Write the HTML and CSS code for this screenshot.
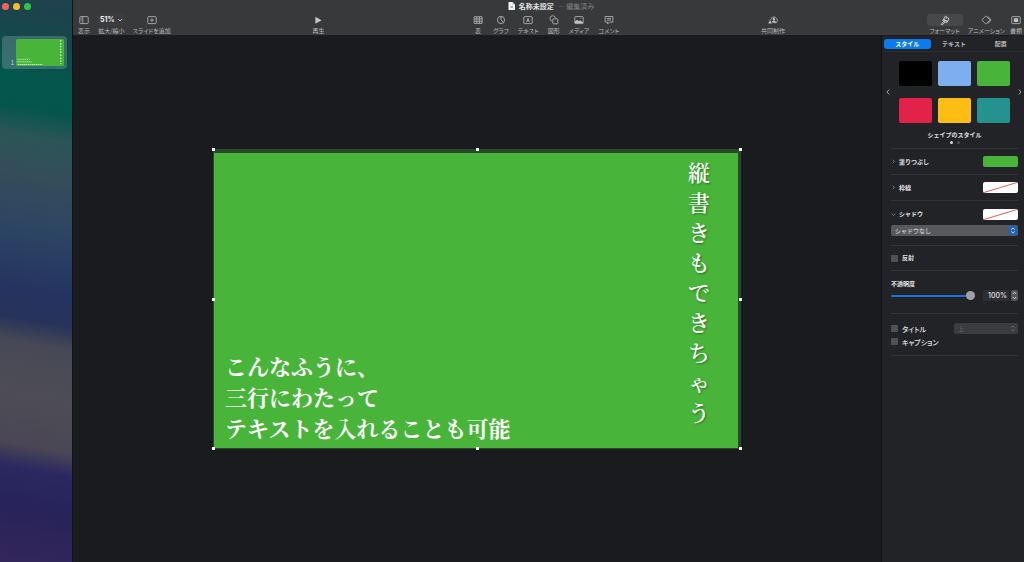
FILE: index.html
```html
<!DOCTYPE html>
<html lang="ja">
<head>
<meta charset="utf-8">
<title>名称未設定</title>
<link rel="stylesheet" href="styles.css">
</head>
<body>
<div class="app">
  <aside class="sidebar">
    <div class="lights"><button class="light red" aria-label="閉じる"></button><button class="light yellow" aria-label="しまう"></button><button class="light green" aria-label="拡大"></button></div>
    <div class="slide-item">
      <span class="slide-no">1</span>
      <svg class="thumb" viewBox="0 0 48 27" aria-hidden="true">
        <rect width="48" height="27" rx="1.5" fill="#48b53a"/>
        <g stroke="#c4ebbd" fill="none">
          <path d="M1.500 20.300h12" stroke-width=".9" stroke-dasharray="1.200 .7"/>
          <path d="M1.500 22.800h14" stroke-width=".9" stroke-dasharray="1.300 .6"/>
          <path d="M1.500 25.500h25" stroke-width="1.100" stroke-dasharray="1.500 .5"/>
          <path d="M44.700 1v24" stroke-width="1.300" stroke-dasharray="1.500 1.400"/>
        </g>
      </svg>
    </div>
  </aside>

  <div class="workspace">
    <header class="toolbar">
      <div class="doc-title">
        <svg width="7" height="8" viewBox="0 0 7 8"><path d="M.5 0h4L7 2.500V8H.5z" fill="#f3f5f7"/><path d="M4.500 0v2.500H7z" fill="#a9bccb"/><path d="M2.500 4h2.500v2H2.500z" fill="#8fb4d4"/></svg>
        <strong>名称未設定</strong><span class="edited">— 編集済み</span>
      </div>
      <nav class="tools">
        <div class="group group-left">
          <button class="tool"><svg viewBox="0 0 10 10"><rect x="1.500" y="2.200" width="7" height="5.800" rx=".7"/><path d="M4 2.200v5.800M2.300 3.700h.8M2.300 5h.8"/></svg>表示</button>
          <button class="tool"><span class="zoom">51%<svg viewBox="0 0 6 6"><path d="M1 2l2 2 2-2"/></svg></span>拡大/縮小</button>
          <button class="tool"><svg viewBox="0 0 10 10"><rect x="1.500" y="2.200" width="7" height="5.800" rx=".7"/><path d="M5 3.600v3M3.500 5.100h3"/></svg>スライドを追加</button>
        </div>
        <div class="group">
          <button class="tool"><svg viewBox="0 0 10 10"><path class="solid" d="M2.800 2.200v6l5.200-3z"/></svg>再生</button>
        </div>
        <div class="group group-insert">
          <button class="tool"><svg viewBox="0 0 10 10"><path d="M1.800 2.300h6.600v5.500H1.800zM1.800 4.100h6.600M1.800 6h6.600M4 2.300v5.500M6.200 2.300v5.500"/></svg>表</button>
          <button class="tool"><svg viewBox="0 0 10 10"><circle cx="5" cy="5" r="3"/><path d="M5 2V5l2.100 2"/></svg>グラフ</button>
          <button class="tool"><svg viewBox="0 0 10 10"><rect x="1.500" y="2.200" width="7" height="5.800" rx=".5"/><path d="M3.900 6.600L5 3.600l1.100 3M4.200 5.700h1.600"/></svg>テキスト</button>
          <button class="tool"><svg viewBox="0 0 10 10"><path d="M3.500 6a2.300 2.300 0 1 1 2.700-2.700"/><rect x="4" y="4" width="4.200" height="4.200" rx=".6"/></svg>図形</button>
          <button class="tool"><svg viewBox="0 0 10 10"><rect x="1.500" y="2.200" width="7" height="5.800" rx=".6"/><path class="solid" d="M1.600 7.800V6.300L3.500 4.700 5 6.100 6 5.200l2.400 1.800v.8z"/><circle class="solid" cx="6.600" cy="3.800" r=".4"/></svg>メディア</button>
          <button class="tool"><svg viewBox="0 0 10 10"><path d="M1.800 2.100h6.400v4.700H5.300L3.900 8.300V6.800H1.800zM3.300 3.800h3.400M3.300 5.100h3.400"/></svg>コメント</button>
        </div>
        <div class="group">
          <button class="tool"><svg viewBox="0 0 10 10"><path d="M3 4.800a2.800 2.800 0 1 1 4.700 2.500H5.500"/><circle class="solid" cx="5.700" cy="4.200" r="1"/><path class="solid" d="M4 7c.3-2 3.200-2 3.500 0zM1.100 8c0-2 2.800-2 2.800 0z"/><circle class="solid" cx="2.500" cy="5.900" r=".7"/></svg>共同制作</button>
        </div>
        <div class="group group-right">
          <button class="tool tool-on"><svg viewBox="0 0 10 10"><path d="M5.400 1.800l3 2.200-1.300 2.300-3.400-1.800zM3.700 4.500l3.400 1.800-.7.900-3.300-1.700zM4 6L1.900 8.700l.9.300 2.400-2.400M6.500 2.700l-.9 1.400"/></svg>フォーマット</button>
          <button class="tool"><svg viewBox="0 0 10 10"><path d="M4.500 1.900a.6.600 0 0 1 .8 0L7.900 4.600a.6.600 0 0 1 0 .8L5.300 8.100a.6.600 0 0 1-.8 0L1.900 5.400a.6.600 0 0 1 0-.8z"/><path d="M6.700 2l2.500 3-2.500 3"/></svg>アニメーション</button>
          <button class="tool"><svg viewBox="0 0 10 10"><rect x="1.500" y="2.200" width="7" height="5.800" rx=".4"/><path class="solid" d="M3.200 3.500h3.600v3.200H3.200z"/></svg>書類</button>
        </div>
      </nav>
    </header>

    <div class="body">
      <main class="canvas">
        <div class="selection">
          <div class="slide">
            <p class="lines">こんなふうに、<br>三行にわたって<br>テキストを入れることも可能</p>
            <p class="column">縦<br>書<br>き<br>も<br>で<br>き<br>ち<br>ゃ<br>う</p>
          </div>
          <i class="handle n w"></i><i class="handle n c"></i><i class="handle n e"></i>
          <i class="handle m w"></i><i class="handle m e"></i>
          <i class="handle s w"></i><i class="handle s c"></i><i class="handle s e"></i>
        </div>
      </main>

      <aside class="inspector">
        <div class="tabs"><button class="tab tab-on">スタイル</button><button class="tab">テキスト</button><button class="tab">配置</button></div>
        <section class="styles">
          <button class="page" aria-label="前へ"><svg viewBox="0 0 4 8"><path d="M3.200 1.500L1 4l2.200 2.500"/></svg></button>
          <div class="swatches">
            <button class="swatch black" aria-label="黒"></button><button class="swatch blue" aria-label="青"></button><button class="swatch lime" aria-label="緑"></button>
            <button class="swatch crimson" aria-label="赤"></button><button class="swatch amber" aria-label="黄"></button><button class="swatch teal" aria-label="青緑"></button>
          </div>
          <button class="page" aria-label="次へ"><svg viewBox="0 0 4 8"><path d="M.8 1.500L3 4 .8 6.500"/></svg></button>
        </section>
        <div class="styles-name">シェイプのスタイル</div>
        <div class="dots"><i class="dot dot-on"></i><i class="dot"></i></div>
        <section class="row">
          <svg class="chev" viewBox="0 0 5 5"><path d="M1.700 .8L3.500 2.500 1.700 4.200"/></svg><span class="row-name">塗りつぶし</span><button class="well lime" aria-label="塗りつぶし"></button>
        </section>
        <section class="row">
          <svg class="chev" viewBox="0 0 5 5"><path d="M1.700 .8L3.500 2.500 1.700 4.200"/></svg><span class="row-name">枠線</span><button class="well" aria-label="枠線"><svg viewBox="0 0 35 11" preserveAspectRatio="none"><path d="M1 10.500L34 .5"/></svg></button>
        </section>
        <section class="row row-open">
          <svg class="chev" viewBox="0 0 5 5"><path d="M.8 1.700L2.500 3.500 4.200 1.700"/></svg><span class="row-name">シャドウ</span><button class="well" aria-label="シャドウ"><svg viewBox="0 0 35 11" preserveAspectRatio="none"><path d="M1 10.500L34 .5"/></svg></button>
        </section>
        <div class="picker shadow-picker">
          <select aria-label="シャドウの種類"><option>シャドウなし</option></select>
          <svg class="arrows" viewBox="0 0 8 9"><rect width="8" height="9" rx="2" fill="#1463d6" stroke="none"/><path d="M2.300 3.600L4 2l1.700 1.600M2.300 5.500L4 7.100l1.700-1.600"/></svg>
        </div>
        <section class="row"><label class="check"><input type="checkbox"><b>反射</b></label></section>
        <section class="opacity">
          <label for="opacity">不透明度</label>
          <div class="opacity-row">
            <input type="range" id="opacity" min="0" max="100" value="100">
            <input type="text" class="percent" value="100%" aria-label="不透明度の値">
            <button class="stepper" aria-label="増減"><svg viewBox="0 0 7 11"><path d="M1.800 4L3.500 2.200 5.200 4M1.800 7L3.500 8.800 5.200 7"/></svg></button>
          </div>
        </section>
        <section class="captions">
          <div class="caption-row">
            <label class="check"><input type="checkbox">タイトル</label>
            <div class="picker place-picker">
              <select aria-label="タイトルの位置" disabled><option>上</option></select>
              <svg class="arrows" viewBox="0 0 8 9"><path d="M2.300 3.600L4 2l1.700 1.600M2.300 5.500L4 7.100l1.700-1.600"/></svg>
            </div>
          </div>
          <div class="caption-row"><label class="check"><input type="checkbox">キャプション</label></div>
        </section>
      </aside>
    </div>
  </div>
</div>
</body>
</html>
```

FILE: styles.css
```css
* { box-sizing: border-box; }
body {
  margin: 0;
  background: #1a1b1f;
  color: #e2e2e4;
  font: 6px/8px "Noto Sans CJK JP", sans-serif;
}
button, input, select {
  margin: 0;
  padding: 0;
  border: 0;
  background: none;
  color: inherit;
  font: inherit;
}
svg { display: block; fill: none; }
p { margin: 0; }

.app { display: flex; min-height: 100vh; }

/* Slide navigator */
.sidebar {
  flex: 0 0 72px;
  padding: 3px 5px 0 2px;
  border-right: 1px solid #101318;
  background: linear-gradient(190deg, #20414f 0%, #16474b 7%, #04574d 15%, #04564d 20%, #2b5557 25%, #344e59 31%, #2c4464 42%, #24335f 52%, #28335b 57%, #464855 61%, #4e4d56 70%, #4a4655 79%, #2a2860 83%, #28235a 90%, #33265a 100%);
}
.lights { display: flex; gap: 4px; }
.light { width: 7px; height: 7px; border-radius: 50%; }
.red { background: #fb5f57; }
.yellow { background: #fdbc2f; }
.green { background: #2bc840; }
.slide-item {
  display: flex;
  align-items: flex-end;
  gap: 2px;
  height: 33px;
  margin-top: 26px;
  padding: 3px;
  border-radius: 4px;
  background: rgba(255, 255, 255, 0.18);
}
.slide-no { width: 9px; text-align: right; color: #c5d8d5; font-size: 6px; line-height: 6px; }
.thumb { width: 48px; height: 27px; }

/* Toolbar */
.workspace { flex: 1; display: flex; flex-direction: column; min-width: 0; }
.toolbar {
  height: 36px;
  padding: 2px 2px 0 5px;
  background: #38393b;
  border-bottom: 1px solid #1c1c22;
}
.doc-title {
  display: flex;
  justify-content: center;
  align-items: center;
  gap: 4px;
  height: 8px;
  padding-left: 2px;
  font-size: 7px;
}
.edited { color: #808183; }
.tools { display: flex; justify-content: space-between; margin-top: 4px; }
.group { display: flex; gap: 9px; }
.group-left { gap: 7px; }
.group-insert { margin-left: 6px; }
.group-right { gap: 5px; }
.tool {
  display: flex;
  flex-direction: column;
  align-items: center;
  gap: 1px;
  color: #b8b8ba;
  font-size: 6px;
  line-height: 8px;
  white-space: nowrap;
  font-feature-settings: "palt";
}
.tool svg { width: 12px; height: 12px; stroke: #b7b7b9; stroke-width: 0.700; }
.tool .solid { fill: #c3c3c5; stroke: none; }
.tool-on svg { width: 36px; border-radius: 3px; background: #47484a; stroke: #e0e0e0; }
.zoom {
  display: flex;
  align-items: center;
  gap: 2px;
  height: 12px;
  padding: 0 3px;
  border-radius: 3px;
  background: #3b3c3e;
  color: #f0f0f0;
  font: bold 7px/12px Inter, sans-serif;
}
.tool .zoom svg { width: 6px; height: 6px; stroke-width: 1; }

/* Canvas */
.body { flex: 1; display: flex; }
.canvas { flex: 1; display: flex; justify-content: center; align-items: center; min-width: 0; }
.selection {
  position: relative;
  width: calc(65% + 3px);
  aspect-ratio: 528 / 300;
  padding: 4px 3px 1px 1px;
  background: #284a2b;
}
.slide { display: flex; justify-content: space-between; height: 100%; background: #48b53a; color: #fff; }
.lines, .column { font-family: "Noto Serif CJK JP", "Noto Sans CJK JP", serif; font-size: 22px; }
.lines { align-self: flex-end; padding: 0 0 5px 11px; font-weight: bold; line-height: 31px; white-space: nowrap; }
.column { padding: 4px 28px 0 0; font-weight: 600; line-height: 30px; text-shadow: 1px 1px 2px rgba(0, 50, 0, 0.5); }
.handle { position: absolute; width: 3px; height: 3px; background: #fff; }
.n { top: -1px; }
.m { top: calc(50% - 1px); }
.s { bottom: -1px; }
.w { left: -1px; }
.c { left: calc(50% - 1px); }
.e { right: -1px; }

/* Inspector */
.inspector { flex: 0 0 143px; min-width: 0; padding: 3px 6px 0 9px; border-left: 1px solid #101114; background: #222327; }
.tabs { display: flex; margin: 0 -6px 0 -7px; padding-bottom: 2px; border-bottom: 1px solid #2a2b2f; }
.tab { flex: 1; height: 10px; color: #b9b9bb; font-weight: bold; line-height: 10px; }
.tab-on { border-radius: 3px; background: #0b7bf0; color: #fff; }
.styles { display: flex; justify-content: space-between; align-items: center; margin: 9px -4px 0 -5px; }
.page svg { width: 4px; height: 8px; stroke: #b0b0b2; stroke-width: 0.900; }
.swatches { display: grid; grid-template-columns: repeat(3, 33px); gap: 12px 6px; }
.swatch { height: 25px; border-radius: 2px; }
.black { background: #000; }
.blue { background: #7daeef; }
.lime { background: #48b53a; }
.crimson { background: #e32249; }
.amber { background: #fdbd15; }
.teal { background: #24938f; }
.styles-name { margin-top: 8px; text-align: center; font-weight: bold; }
.dots { display: flex; justify-content: center; gap: 4px; height: 10px; padding-top: 2px; border-bottom: 1px solid #323337; }
.dot { width: 3px; height: 3px; border-radius: 50%; background: #505154; }
.dot-on { background: #d8d8da; }
.row { display: flex; align-items: center; height: 26px; border-bottom: 1px solid #323337; }
.row-open { height: 24px; padding-top: 2px; border-bottom: 0; }
.chev { width: 5px; height: 5px; stroke: #9a9a9d; stroke-width: 0.700; }
.row-name { flex: 1; padding-left: 3px; font-weight: bold; }
.well { width: 35px; height: 11px; border-radius: 2px; overflow: hidden; }
.well:not(.lime) { background: #fff; }
.well svg { width: 100%; height: 100%; stroke: #e0605a; stroke-width: 1; }
.picker { position: relative; border-radius: 2px; background: #58595c; }
.picker select { display: block; width: 100%; height: 11px; padding: 0 10px 0 4px; appearance: none; line-height: 11px; }
.arrows { position: absolute; top: 1px; right: 1px; width: 8px; height: 9px; stroke: #fff; stroke-width: 0.900; pointer-events: none; }
.shadow-picker { margin-bottom: 9px; }
.shadow-picker + .row { border-top: 1px solid #323337; }
.check { display: flex; align-items: center; gap: 4px; font-size: 7px; font-weight: 500; font-feature-settings: "palt"; }
.check b { font-size: 6px; }
.check input { width: 7px; height: 7px; appearance: none; border-radius: 1px; background: #505155; }
.opacity { height: 43px; padding-top: 9px; border-bottom: 1px solid #323337; font-weight: bold; }
.opacity label { display: block; }
.opacity-row { display: flex; align-items: center; margin-top: 2px; }
input[type="range"] { flex: 1; min-width: 0; height: 9px; appearance: none; }
input[type="range"]::-webkit-slider-runnable-track { height: 2px; border-radius: 1px; background: #1d6fdc; }
input[type="range"]::-webkit-slider-thumb { appearance: none; width: 9px; height: 9px; margin-top: -4px; border-radius: 50%; background: #a0a1a3; }
.percent { width: 26px; height: 11px; margin: 0 2px 0 8px; padding-right: 2px; background: #2d2e32; text-align: right; font: 500 7px/11px Inter, sans-serif; }
.stepper { width: 7px; height: 11px; border-radius: 2px; background: #56575a; }
.stepper svg { width: 7px; height: 11px; stroke: #e0e0e0; stroke-width: 0.900; }
.captions { height: 42px; padding-top: 8px; border-bottom: 1px solid #323337; }
.caption-row { display: flex; align-items: center; justify-content: space-between; height: 13px; }
.place-picker { width: 64px; background: #3b3c3f; color: #68696c; }
.place-picker select { opacity: 1; }
.place-picker .arrows { stroke: #707174; }
```
